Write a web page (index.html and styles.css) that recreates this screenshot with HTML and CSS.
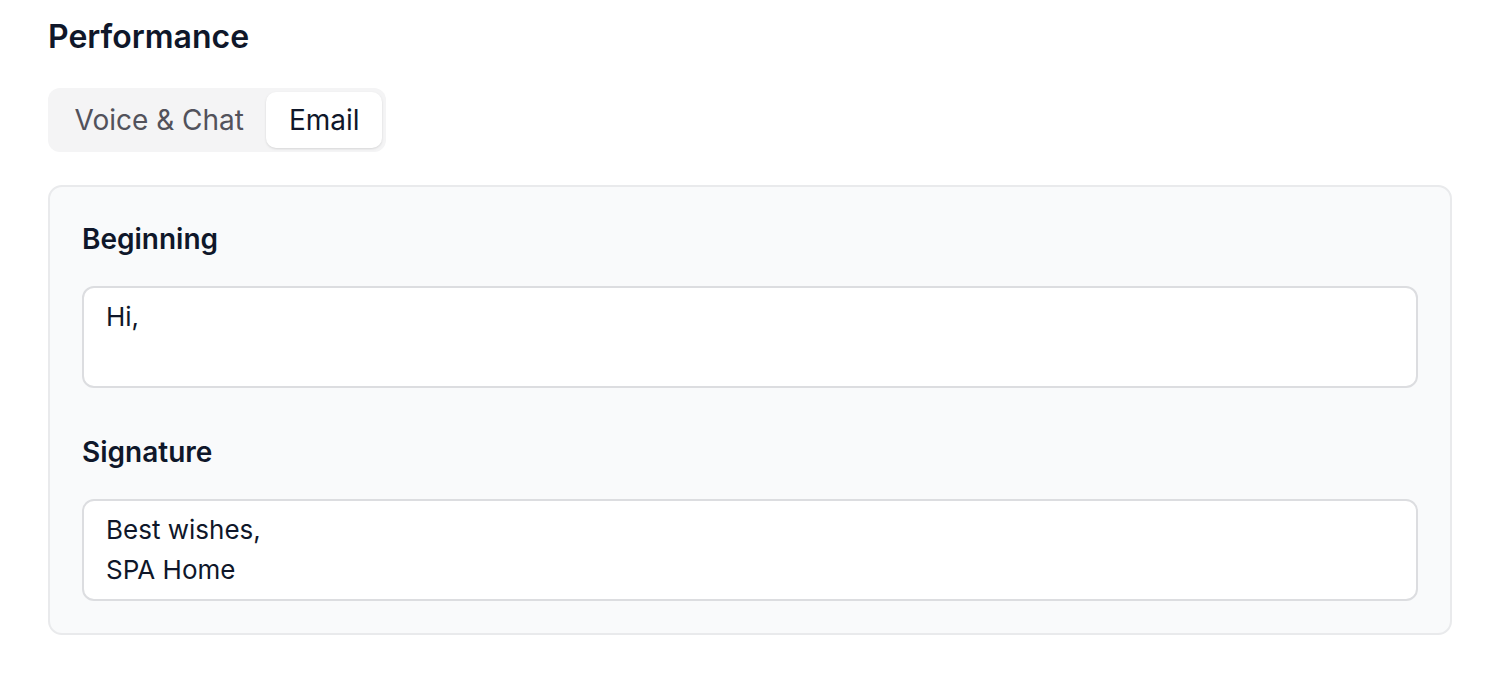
FILE: index.html
```html
<!DOCTYPE html>
<html lang="en">
<head>
<meta charset="utf-8">
<title>Performance</title>
<link rel="stylesheet" href="styles.css">
</head>
<body>
<main class="page">
  <h1 class="title">Performance</h1>
  <div class="tabs" role="tablist">
    <button class="tab" role="tab">Voice &amp; Chat</button>
    <button class="tab tab-active" role="tab" aria-selected="true">Email</button>
  </div>
  <section class="card">
    <div class="field">
      <label class="label" for="beginning">Beginning</label>
      <textarea id="beginning" class="input" rows="2">Hi,</textarea>
    </div>
    <div class="field">
      <label class="label" for="signature">Signature</label>
      <textarea id="signature" class="input" rows="2">Best wishes,
SPA Home</textarea>
    </div>
  </section>
</main>
</body>
</html>
```

FILE: styles.css
```css
* { box-sizing: border-box; }

html, body {
  margin: 0;
  padding: 0;
  background: #ffffff;
}

body {
  font-family: Inter, "Noto Sans", "Liberation Sans", sans-serif;
  color: #0f172a;
}

.page {
  padding: 13px 46px 0 48px;
}

.title {
  margin: 0;
  font-size: 32px;
  line-height: 48px;
  font-weight: 600;
  color: #0f172a;
}

.tabs {
  display: inline-flex;
  margin-top: 27px;
  padding: 4px;
  background: #f4f4f5;
  border-radius: 12px;
}

.tab {
  font-family: inherit;
  font-size: 28px;
  line-height: 40px;
  height: 56px;
  padding: 8px 22.5px;
  border: 0;
  background: transparent;
  color: #52525b;
  border-radius: 10px;
  cursor: pointer;
}

.tab-active {
  background: #ffffff;
  color: #0f172a;
  box-shadow: 0 1px 3px rgba(0, 0, 0, 0.08), 0 1px 2px rgba(0, 0, 0, 0.05);
}

.card {
  margin-top: 33px;
  background: #f9fafb;
  border: 2px solid #e9eaec;
  border-radius: 14px;
  padding: 32px;
  display: flex;
  flex-direction: column;
  gap: 44px;
}

.field {
  display: flex;
  flex-direction: column;
}

.label {
  font-size: 28px;
  line-height: 40px;
  font-weight: 600;
  color: #0f172a;
  margin-bottom: 27px;
}

.input {
  display: block;
  width: 100%;
  height: 102px;
  font-family: inherit;
  font-size: 26px;
  line-height: 40px;
  color: #0f172a;
  background: #ffffff;
  border: 2px solid #dcdde0;
  border-radius: 12px;
  padding: 9px 22px;
  resize: none;
  outline: none;
  overflow: hidden;
}
```
